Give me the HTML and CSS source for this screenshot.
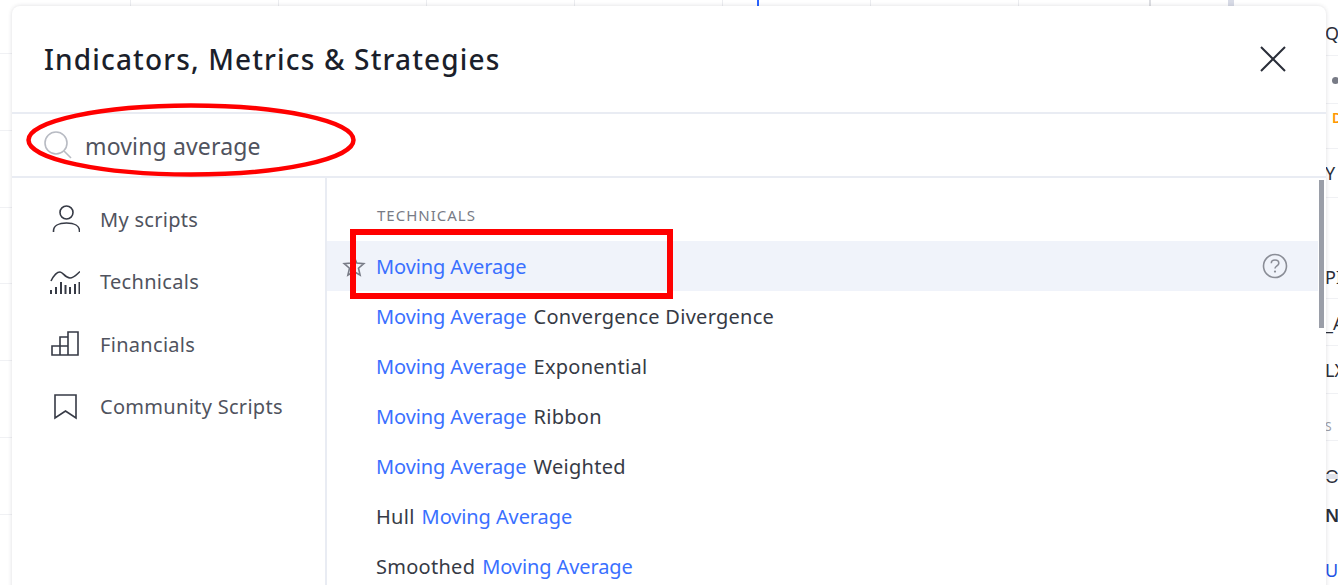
FILE: index.html
```html
<!DOCTYPE html>
<html lang="en">
<head>
    <meta charset="UTF-8">
    <meta name="viewport" content="width=device-width, initial-scale=1.0">
    <title>Indicators, Metrics &amp; Strategies</title>
    <link rel="stylesheet" href="styles.css">
</head>
<body>
    <div class="chart-bg"></div>
    <div class="watchlist">
        <div class="wl-row wl-q">Q</div>
        <div class="wl-row wl-dot"><span class="dot"></span></div>
        <div class="wl-row wl-orange">D</div>
        <div class="wl-row wl-y">Y</div>
        <div class="wl-row wl-p">PI</div>
        <div class="wl-row wl-a">_A</div>
        <div class="wl-row wl-lx">LX</div>
        <div class="wl-row wl-s">S</div>
        <div class="wl-row wl-o">O</div>
        <div class="wl-band"></div>
        <div class="wl-row wl-n">N</div>
        <div class="wl-row wl-u">U</div>
    </div>
    <span class="blue-tick"></span>
    <span class="grey-tick"></span>

    <div class="dialog">
        <div class="dialog-head">
            <h1 class="title">Indicators, Metrics &amp; Strategies</h1>
            <svg class="close-icon" viewBox="0 0 28 28" width="28" height="28">
                <path d="M2 2 L26 26 M26 2 L2 26" fill="none" stroke="#2a2e39" stroke-width="2"/>
            </svg>
        </div>
        <div class="search-row">
            <svg class="search-icon" viewBox="0 0 30 30" width="30" height="30">
                <circle cx="13" cy="13" r="11" fill="none" stroke="#b8bbc3" stroke-width="1.6"/>
                <path d="M21 21 L28 28" fill="none" stroke="#b8bbc3" stroke-width="1.6"/>
            </svg>
            <span class="search-text">moving average</span>
        </div>
        <div class="dialog-body">
            <div class="sidebar">
                <div class="side-item">
                    <svg class="side-icon" viewBox="0 0 30 30" width="30" height="30">
                        <circle cx="16.5" cy="8.5" r="6.5"/>
                        <path d="M3.5 28 V27 C3.5 22 8.5 19 16.5 19 C24.5 19 29.5 22 29.5 27 V28"/>
                    </svg>
                    My scripts
                </div>
                <div class="side-item">
                    <svg class="side-icon" viewBox="0 0 30 30" width="30" height="30">
                        <path d="M1 14 C4 8 7 5 10 5 C13 5 15 11 20 11 C24 11 26 8 30 4.5"/>
                        <path d="M1 23 V27 M6 20 V27 M11 15 V27 M15.5 18 V27 M20 20 V27 M25 17 V27 M29.5 15 V27" stroke-width="2"/>
                    </svg>
                    Technicals
                </div>
                <div class="side-item">
                    <svg class="side-icon" viewBox="0 0 30 30" width="30" height="30">
                        <path d="M2 17 H10 V26 H2 Z M10 8 H18 V26 H10 Z M18 3 H28 V26 H18 Z M10 17 H18"/>
                    </svg>
                    Financials
                </div>
                <div class="side-item">
                    <svg class="side-icon" viewBox="0 0 30 30" width="30" height="30">
                        <path d="M5 3 H26 V26 L15.5 19 L5 26 Z"/>
                    </svg>
                    Community Scripts
                </div>
            </div>
            <div class="results">
                <div class="section-label">TECHNICALS</div>
                <div class="result active">
                    <svg class="star" viewBox="0 0 24 24" width="24" height="24">
                        <path d="M12 2.5 L14.8 9 L21.8 9.6 L16.5 14.2 L18.1 21.2 L12 17.5 L5.9 21.2 L7.5 14.2 L2.2 9.6 L9.2 9 Z"/>
                    </svg>
                    <span class="hl">Moving Average</span>
                    <svg class="help" viewBox="0 0 26 26" width="26" height="26">
                        <circle cx="13" cy="13" r="11.5" fill="none" stroke="#8a8d96" stroke-width="1.6"/>
                        <path d="M9.3 10.2 C9.3 8 11 7 13 7 C15 7 16.8 8.2 16.8 10.2 C16.8 12.8 13 12.8 13 15.5" fill="none" stroke="#8a8d96" stroke-width="1.6"/>
                        <circle cx="13" cy="18.6" r="1.1" fill="#8a8d96"/>
                    </svg>
                </div>
                <div class="result"><span class="hl">Moving Average</span> Convergence Divergence</div>
                <div class="result"><span class="hl">Moving Average</span> Exponential</div>
                <div class="result"><span class="hl">Moving Average</span> Ribbon</div>
                <div class="result"><span class="hl">Moving Average</span> Weighted</div>
                <div class="result">Hull <span class="hl">Moving Average</span></div>
                <div class="result">Smoothed <span class="hl">Moving Average</span></div>
            </div>
            <div class="scrollbar"></div>
        </div>
    </div>

    <svg class="mark-ellipse" viewBox="0 0 330 74" width="330" height="74">
        <ellipse cx="165" cy="37" rx="162.5" ry="34.5" fill="none" stroke="#ff0000" stroke-width="4.5"/>
    </svg>
    <div class="mark-rect"></div>
</body>
</html>
```

FILE: styles.css
```css
html, body {
    margin: 0;
    height: 585px;
    overflow: hidden;
}

body {
    position: relative;
    width: 1338px;
    background-color: #FFFFFF;
    color: #2A2E39;
    font-family: "Noto Sans", sans-serif;
}

/* chart grid behind the dialog */
.chart-bg {
    position: absolute;
    left: 0;
    top: 0;
    width: 1326px;
    height: 585px;
    background-image:
        repeating-linear-gradient(180deg, transparent 0, transparent 53px, #F0F1F4 53px, #F0F1F4 54px, transparent 54px, transparent 76.8px),
        repeating-linear-gradient(90deg, transparent 0, transparent 130px, #ECEDF0 130px, #ECEDF0 131.5px, transparent 131.5px, transparent 148px),
        linear-gradient(#DDDEE2, #DDDEE2);
    background-size: 12px 585px, 1030px 6px, 2px 6px;
    background-position: 0 0, 0 0, 1149px 0;
    background-repeat: no-repeat;
}

.blue-tick {
    position: absolute;
    left: 757px;
    top: 0;
    width: 2px;
    height: 6px;
    background-color: #2962FF;
}

.grey-tick {
    position: absolute;
    left: 1228px;
    top: 0;
    width: 6px;
    height: 6px;
    background-color: #D8DBE6;
}

.watchlist {
    position: absolute;
    left: 1325px;
    top: 0;
    width: 13px;
    height: 585px;
    overflow: hidden;
    font-size: 18px;
    color: #2A2E39;
    background-image:
        linear-gradient(#F0F1F4, #F0F1F4), linear-gradient(#F0F1F4, #F0F1F4),
        linear-gradient(#F0F1F4, #F0F1F4), linear-gradient(#F0F1F4, #F0F1F4),
        linear-gradient(#F0F1F4, #F0F1F4), linear-gradient(#F0F1F4, #F0F1F4),
        linear-gradient(#F0F1F4, #F0F1F4), linear-gradient(#F0F1F4, #F0F1F4);
    background-size: 13px 1px;
    background-repeat: no-repeat;
    background-position: 0 55px, 0 103px, 0 148px, 0 197px, 0 298px, 0 345px, 0 393px, 0 440px;
}

.wl-row {
    position: absolute;
    left: 0;
    line-height: 20px;
}

.wl-q { top: 23px; }
.wl-dot { top: 70px; }
.wl-orange { top: 108px; left: 7px; color: #FF9800; font-size: 14px; font-weight: 600; }
.wl-y { top: 163px; }
.wl-p { top: 267px; }
.wl-a { top: 313px; }
.wl-lx { top: 360px; }
.wl-s { top: 417px; color: #9A9EA8; font-size: 12px; }
.wl-o { top: 466px; }
.wl-n { top: 505px; font-weight: 600; }
.wl-u { top: 560px; color: #1E53E5; }

.wl-band {
    position: absolute;
    left: 0;
    top: 474px;
    width: 13px;
    height: 5px;
    background-color: #E0E3EB;
}

.dot {
    display: block;
    width: 7px;
    height: 7px;
    margin: 7px 0 0 7px;
    border-radius: 50%;
    background-color: #787B86;
}

.dialog {
    position: absolute;
    left: 12px;
    top: 6px;
    width: 1314px;
    height: 590px;
    display: flex;
    flex-direction: column;
    background-color: #FFFFFF;
    border-radius: 8px 8px 0 0;
    box-shadow: 0 0 4px rgba(42, 46, 57, 0.16);
}

.dialog-head {
    height: 108px;
    flex: none;
    display: flex;
    align-items: center;
    justify-content: space-between;
    padding: 0 39px 0 32px;
    border-bottom: 2px solid #E9ECF3;
    box-sizing: border-box;
}

.title {
    margin: 0;
    font-size: 28px;
    font-weight: 500;
    letter-spacing: 1.15px;
    color: #1B1F2B;
}

.close-icon {
    flex: none;
}

.search-row {
    height: 64px;
    flex: none;
    display: flex;
    align-items: center;
    gap: 12px;
    padding: 0 0 0 31px;
    border-bottom: 2px solid #E9ECF3;
    box-sizing: border-box;
}

.search-text {
    padding-top: 2px;
    font-size: 23px;
    letter-spacing: 0.15px;
    color: #50535E;
}

.dialog-body {
    flex: 1;
    display: flex;
    min-height: 0;
    position: relative;
}

.sidebar {
    width: 315px;
    flex: none;
    box-sizing: border-box;
    padding-top: 10px;
    border-right: 2px solid #E9ECF3;
}

.side-item {
    height: 62.5px;
    display: flex;
    align-items: center;
    gap: 20px;
    padding-left: 38px;
    font-size: 20px;
    letter-spacing: 0.3px;
    color: #50535E;
}

.side-icon {
    flex: none;
    width: 30px;
    height: 30px;
    fill: none;
    stroke: #363A45;
    stroke-width: 1.6;
}

.results {
    flex: 1;
}

.section-label {
    height: 63px;
    box-sizing: border-box;
    padding: 26px 0 0 50px;
    font-size: 15px;
    letter-spacing: 1px;
    line-height: 22px;
    color: #787B86;
}

.result {
    position: relative;
    height: 50px;
    margin-right: 8px;
    display: flex;
    align-items: center;
    gap: 7px;
    padding-left: 49px;
    font-size: 20px;
    letter-spacing: 0.27px;
    color: #363A45;
}

.result.active {
    background-color: #F0F3FA;
}

.hl {
    color: #3A70FF;
    letter-spacing: -0.1px;
}

.star {
    position: absolute;
    left: 15px;
    top: 13px;
    fill: none;
    stroke: #787B86;
    stroke-width: 1.6;
}

.help {
    position: absolute;
    right: 30px;
    top: 12px;
}

.scrollbar {
    position: absolute;
    left: 1307px;
    top: 2px;
    width: 4.5px;
    height: 148px;
    background-color: #9A9EA8;
}

/* red annotation marks drawn over the screenshot */
.mark-ellipse {
    position: absolute;
    left: 26px;
    top: 103px;
}

.mark-rect {
    position: absolute;
    left: 350px;
    top: 229px;
    width: 311px;
    height: 58px;
    border: 6px solid #FF0000;
}
```
